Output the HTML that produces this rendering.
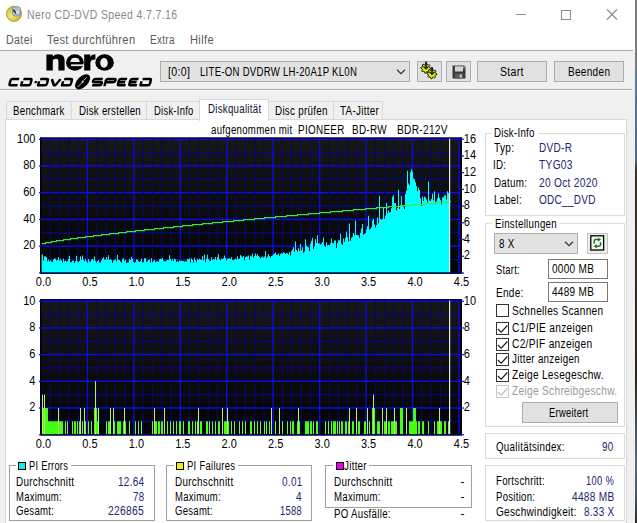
<!DOCTYPE html>
<html><head><meta charset="utf-8"><style>
*{margin:0;padding:0;box-sizing:border-box}
html,body{width:637px;height:523px;overflow:hidden;background:#f0f0f0;font-family:"Liberation Sans",sans-serif}
.a{position:absolute}
.t{position:absolute;white-space:pre;line-height:1;transform-origin:0 0;font-family:"Liberation Sans",sans-serif}
.btn{position:absolute;background:#e1e1e1;border:1px solid #adadad}
.grp{position:absolute;border:1px solid #dcdcdc}
.grpd{position:absolute;border:1px solid #a0a0a0}
.cb{position:absolute;width:13px;height:13px;border:1px solid #333;background:#fff}
</style></head><body>
<div class="a" style="left:0;top:0;width:635px;height:50px;background:#fff"></div>
<div class="a" style="left:0;top:50px;width:633px;height:1px;background:#a9a9a9"></div>
<div class="a" style="left:635px;top:0;width:2px;height:523px;background:linear-gradient(#7a7a7a 0,#7a7a7a 66px,#5a7c9a 74px,#4a6c8c 160px,#3a3224 170px,#2c281c 380px,#4a5460 430px,#5a6a7a 460px,#4a5a68 495px,#2a2a2a 523px)"></div>
<svg class="a" style="left:5px;top:5px" width="18" height="18"><defs><radialGradient id="ic" cx="0.35" cy="0.6" r="0.7"><stop offset="0" stop-color="#f4ec70"/><stop offset="1" stop-color="#c0a830"/></radialGradient></defs><circle cx="9" cy="8.8" r="7.6" fill="url(#ic)" stroke="#a09040" stroke-width="0.8"/><rect x="7.5" y="1.8" width="8" height="9" rx="2" fill="#b0c0cc" stroke="#707a84" stroke-width="0.6"/><path d="M8.3 4.8L11 8.3" stroke="#303030" stroke-width="1.5"/><circle cx="12.5" cy="7" r="1.3" fill="#e0eef8"/></svg>
<div class="a" style="left:516px;top:14px;width:10px;height:1px;background:#8c8c8c"></div>
<div class="a" style="left:561px;top:9.5px;width:10px;height:10px;border:1px solid #8c8c8c"></div>
<svg class="a" style="left:606px;top:9px" width="12" height="11"><path d="M1 0.5L11 10.5M11 0.5L1 10.5" stroke="#8c8c8c" stroke-width="1.1"/></svg>
<div class="a" style="left:0;top:89px;width:632px;height:1px;background:#a9a9a9"></div>
<div class="a" style="left:0;top:90px;width:632px;height:1px;background:#fff"></div>
<div class="a" style="left:160px;top:61px;width:250px;height:21px;background:#e2e2e2;border:1px solid #adadad"></div>
<svg class="a" style="left:396px;top:69px" width="10" height="6"><path d="M1 0.8L5 4.6L9 0.8" fill="none" stroke="#333" stroke-width="1.2"/></svg>
<div class="btn" style="left:417px;top:61px;width:25px;height:21px"></div>
<div class="btn" style="left:446px;top:61px;width:25px;height:21px"></div>
<svg class="a" style="left:418px;top:60px" width="22" height="23"><polygon points="12.80,8.20 12.70,9.18 11.13,9.58 10.79,10.20 11.34,11.74 10.58,12.36 9.18,11.53 8.50,11.73 7.80,13.20 6.82,13.10 6.42,11.53 5.80,11.19 4.26,11.74 3.64,10.98 4.47,9.58 4.27,8.90 2.80,8.20 2.90,7.22 4.47,6.82 4.81,6.20 4.26,4.66 5.02,4.04 6.42,4.87 7.10,4.67 7.80,3.20 8.78,3.30 9.18,4.87 9.80,5.21 11.34,4.66 11.96,5.42 11.13,6.82 11.33,7.50" fill="#e4ee10" stroke="#101000" stroke-width="0.9"/><polygon points="18.90,13.80 18.80,14.78 17.23,15.18 16.89,15.80 17.44,17.34 16.68,17.96 15.28,17.13 14.60,17.33 13.90,18.80 12.92,18.70 12.52,17.13 11.90,16.79 10.36,17.34 9.74,16.58 10.57,15.18 10.37,14.50 8.90,13.80 9.00,12.82 10.57,12.42 10.91,11.80 10.36,10.26 11.12,9.64 12.52,10.47 13.20,10.27 13.90,8.80 14.88,8.90 15.28,10.47 15.90,10.81 17.44,10.26 18.06,11.02 17.23,12.42 17.43,13.10" fill="#e4ee10" stroke="#101000" stroke-width="0.9"/><path d="M8 1.5V8.5M14 7V14" stroke="#181818" stroke-width="1.7"/><path d="M5.5 6.5L8 9L10.5 6.5M11.5 12L14 14.5L16.5 12" fill="none" stroke="#181818" stroke-width="1.1"/></svg><svg class="a" style="left:452px;top:65px" width="14" height="14"><path d="M0.5 0.5H12L13.5 2V13.5H0.5Z" fill="#3a3a3a"/><rect x="3" y="1.3" width="8" height="5.2" fill="#d4d4d4"/><rect x="11.3" y="1.8" width="1.2" height="1.6" fill="#d4d4d4"/><rect x="3" y="8.5" width="8" height="5" fill="#5a5a5a"/><rect x="7.6" y="9.5" width="2.4" height="3" fill="#c0c0c0"/></svg>
<div class="btn" style="left:477px;top:61px;width:70px;height:21px"></div>
<div class="btn" style="left:554px;top:61px;width:70px;height:21px"></div>
<svg class="a" style="left:0;top:0" width="160" height="92"><path d="M46.4 70.6V54.6H52.8V56.6Q54.6 54.2 58.2 54.2Q64.6 54.2 64.6 60.6V70.6H58.4V61.4Q58.4 58.8 56 58.8Q52.8 58.8 52.8 61.6V70.6Z" fill="#000"/><ellipse cx="74.9" cy="62.5" rx="8.9" ry="8.2" fill="#000"/><path d="M70.3 61.9Q70.7 57.7 75 57.7Q79.3 57.7 79.7 61.9Z" fill="#f0f0f0"/><rect x="71" y="64.4" width="13" height="1.7" fill="#f0f0f0"/><path d="M84.2 70.6V54.6H90.2V57Q91.5 54.2 95.4 54.2V59.6Q90.4 59.6 90.4 63V70.6Z" fill="#000"/><ellipse cx="104.6" cy="62.5" rx="9.3" ry="8.2" fill="#000"/><ellipse cx="104" cy="62.9" rx="3.8" ry="4.8" fill="#f0f0f0"/></svg>
<svg class="a" style="left:0;top:0" width="160" height="92"><g transform="translate(20.47 0) skewX(-14)"><path d="M18.35 79.05 H11.450000000000001 Q10.05 79.05 10.05 80.45 V83.75 Q10.05 85.15 11.450000000000001 85.15 H18.35 M22.650000000000002 79.05 H29.550000000000004 Q30.950000000000003 79.05 30.950000000000003 80.45 V83.75 Q30.950000000000003 85.15 29.550000000000004 85.15 H22.05 V81.3 M51.05 79.05 L54.704 85.15 H56.269999999999996 L59.75 79.05 M39.45 79.05 H45.95 Q47.35 79.05 47.35 80.45 V83.75 Q47.35 85.15 45.95 85.15 H38.85 V81.3 M63.45 79.05 H69.94999999999999 Q71.35 79.05 71.35 80.45 V83.75 Q71.35 85.15 69.94999999999999 85.15 H62.85 V81.3 M101.95 79.05 H94.25 Q92.85 79.05 92.85 80.45 V81.1 Q92.85 82.1 94.25 82.1 H100.55 Q101.95 82.1 101.95 83.1 V83.75 Q101.95 85.15 100.55 85.15 H92.85 M105.45 86.25 V80.45 Q105.45 79.05 106.85000000000001 79.05 H113.55 Q114.95 79.05 114.95 80.45 V81.1 Q114.95 82.1 113.55 82.1 H106.45 M126.35 79.05 H119.85000000000001 Q118.45 79.05 118.45 80.45 V83.75 Q118.45 85.15 119.85000000000001 85.15 H126.35 M118.45 82.1 H125.14999999999999 M137.75 79.05 H131.25 Q129.85 79.05 129.85 80.45 V83.75 Q129.85 85.15 131.25 85.15 H137.75 M129.85 82.1 H136.55 M141.85 79.05 H148.95 Q150.35 79.05 150.35 80.45 V83.75 Q150.35 85.15 148.95 85.15 H141.25 V81.3" fill="none" stroke="#000" stroke-width="2.55" stroke-linejoin="round"/><rect x="34.6" y="81" width="2.2" height="2.2" fill="#000"/></g><g transform="translate(82.6 81.8) rotate(-45)"><ellipse cx="0" cy="0" rx="9.2" ry="5.3" fill="#000"/><path d="M-7 0.2 H-1.5 M1.5 -0.2 H6" stroke="#e8e8e8" stroke-width="0.8"/><ellipse cx="0" cy="0" rx="1.3" ry="0.9" fill="#e0e0e0"/></g></svg>
<div class="a" style="left:6px;top:101px;width:66px;height:19px;background:#f0f0f0;border:1px solid #d9d9d9;border-bottom:none"></div>
<div class="a" style="left:71px;top:101px;width:76px;height:19px;background:#f0f0f0;border:1px solid #d9d9d9;border-bottom:none"></div>
<div class="a" style="left:146px;top:101px;width:54px;height:19px;background:#f0f0f0;border:1px solid #d9d9d9;border-bottom:none"></div>
<div class="a" style="left:268px;top:101px;width:66px;height:19px;background:#f0f0f0;border:1px solid #d9d9d9;border-bottom:none"></div>
<div class="a" style="left:333px;top:101px;width:50px;height:19px;background:#f0f0f0;border:1px solid #d9d9d9;border-bottom:none"></div>
<div class="a" style="left:5px;top:119px;width:622px;height:410px;background:#fff;border:1px solid #d9d9d9"></div>
<div class="a" style="left:199px;top:98.5px;width:70px;height:22px;background:#fff;border:1px solid #d9d9d9;border-bottom:none"></div>
<div class="grp" style="left:485px;top:133px;width:140px;height:83px"></div>
<div class="a" style="left:492px;top:128px;width:46px;height:10px;background:#fff"></div>
<div class="grp" style="left:485px;top:223px;width:140px;height:204px"></div>
<div class="a" style="left:492px;top:218px;width:67px;height:10px;background:#fff"></div>
<div class="grp" style="left:485px;top:433px;width:140px;height:26px"></div>
<div class="grp" style="left:485px;top:465px;width:140px;height:56px"></div>
<div class="a" style="left:494px;top:233px;width:84px;height:21px;background:#e2e2e2;border:1px solid #adadad"></div>
<svg class="a" style="left:563.6px;top:241px" width="10" height="6"><path d="M1 0.8L5 4.6L9 0.8" fill="none" stroke="#333" stroke-width="1.2"/></svg>
<div class="btn" style="left:587px;top:233px;width:21px;height:21px;background:#ececec;border-color:#c4c4c4"></div>
<svg class="a" style="left:589px;top:234px" width="17" height="18"><rect x="1.8" y="1.8" width="12.8" height="14.2" fill="#f2fbf2" stroke="#000" stroke-width="1.3"/><path d="M5.2 9.5V7.3Q5.2 5.6 6.9 5.6H9.5M11.5 8.3V10.6Q11.5 12.3 9.8 12.3H7.3" fill="none" stroke="#1e6e1e" stroke-width="1.5"/><path d="M9 3.4L12 5.6L9 7.8ZM7.8 10.1L4.8 12.3L7.8 14.5Z" fill="#1e6e1e"/></svg>
<div class="a" style="left:548px;top:259px;width:60px;height:20px;background:#fff;border:1px solid #7a7a7a"></div>
<div class="a" style="left:548px;top:282px;width:60px;height:20px;background:#fff;border:1px solid #7a7a7a"></div>
<div class="cb" style="left:496px;top:304px;border-color:#333"></div>
<div class="cb" style="left:496px;top:322px;border-color:#333"></div>
<svg class="a" style="left:496px;top:322px" width="13" height="13"><path d="M1.8 7L5.2 10.2L11.3 3.5" fill="none" stroke="#202020" stroke-width="1.2"/></svg>
<div class="cb" style="left:496px;top:337.5px;border-color:#333"></div>
<svg class="a" style="left:496px;top:337.5px" width="13" height="13"><path d="M1.8 7L5.2 10.2L11.3 3.5" fill="none" stroke="#202020" stroke-width="1.2"/></svg>
<div class="cb" style="left:496px;top:353px;border-color:#333"></div>
<svg class="a" style="left:496px;top:353px" width="13" height="13"><path d="M1.8 7L5.2 10.2L11.3 3.5" fill="none" stroke="#202020" stroke-width="1.2"/></svg>
<div class="cb" style="left:496px;top:369px;border-color:#333"></div>
<svg class="a" style="left:496px;top:369px" width="13" height="13"><path d="M1.8 7L5.2 10.2L11.3 3.5" fill="none" stroke="#202020" stroke-width="1.2"/></svg>
<div class="cb" style="left:496px;top:384.5px;border-color:#c8c8c8"></div>
<svg class="a" style="left:496px;top:384.5px" width="13" height="13"><path d="M1.8 7L5.2 10.2L11.3 3.5" fill="none" stroke="#c0c0c0" stroke-width="1.2"/></svg>
<div class="btn" style="left:522px;top:402px;width:96px;height:21px"></div>
<div class="grpd" style="left:8.5px;top:465px;width:146px;height:56px"></div>
<div class="a" style="left:16px;top:459px;width:55px;height:10px;background:#fff"></div>
<div class="a" style="left:18px;top:462px;width:8px;height:8px;background:#10f0f0;border:1px solid #000"></div>
<div class="grpd" style="left:166px;top:465px;width:146px;height:56px"></div>
<div class="a" style="left:174px;top:459px;width:64px;height:10px;background:#fff"></div>
<div class="a" style="left:176px;top:462px;width:8px;height:8px;background:#f0f000;border:1px solid #000"></div>
<div class="grpd" style="left:325px;top:465px;width:147px;height:43px"></div>
<div class="a" style="left:333px;top:459px;width:36px;height:10px;background:#fff"></div>
<div class="a" style="left:335.5px;top:462px;width:8px;height:8px;background:#f000f0;border:1px solid #000"></div>
<svg style="position:absolute;left:0;top:0" width="637" height="523">
<defs>
<linearGradient id="gT" x1="0" y1="0" x2="0" y2="1"><stop offset="0" stop-color="#171714"/><stop offset="1" stop-color="#030303"/></linearGradient>
<linearGradient id="gB" x1="0" y1="0" x2="0" y2="1"><stop offset="0" stop-color="#171714"/><stop offset="1" stop-color="#030303"/></linearGradient>
</defs>
<rect x="40" y="137.5" width="422" height="136" fill="url(#gT)"/>
<rect x="41" y="138.50" width="420" height="1.4" fill="#0c0cf0"/>
<rect x="41" y="151.97" width="420" height="1.2" fill="#08088c"/>
<rect x="41" y="165.24" width="420" height="1.4" fill="#0c0cf0"/>
<rect x="41" y="178.71" width="420" height="1.2" fill="#08088c"/>
<rect x="41" y="191.98" width="420" height="1.4" fill="#0c0cf0"/>
<rect x="41" y="205.45" width="420" height="1.2" fill="#08088c"/>
<rect x="41" y="218.72" width="420" height="1.4" fill="#0c0cf0"/>
<rect x="41" y="232.19" width="420" height="1.2" fill="#08088c"/>
<rect x="41" y="245.46" width="420" height="1.4" fill="#0c0cf0"/>
<rect x="41" y="258.93" width="420" height="1.2" fill="#08088c"/>
<rect x="41" y="272.20" width="420" height="1.4" fill="#0c0cf0"/>
<rect x="40.30" y="138" width="1.4" height="134" fill="#0c0ce0"/>
<rect x="49.69" y="138" width="1.2" height="134" fill="#080866"/>
<rect x="58.98" y="138" width="1.2" height="134" fill="#080866"/>
<rect x="68.26" y="138" width="1.2" height="134" fill="#080866"/>
<rect x="77.55" y="138" width="1.2" height="134" fill="#080866"/>
<rect x="86.74" y="138" width="1.4" height="134" fill="#0c0ce0"/>
<rect x="96.13" y="138" width="1.2" height="134" fill="#080866"/>
<rect x="105.42" y="138" width="1.2" height="134" fill="#080866"/>
<rect x="114.70" y="138" width="1.2" height="134" fill="#080866"/>
<rect x="123.99" y="138" width="1.2" height="134" fill="#080866"/>
<rect x="133.18" y="138" width="1.4" height="134" fill="#0c0ce0"/>
<rect x="142.57" y="138" width="1.2" height="134" fill="#080866"/>
<rect x="151.86" y="138" width="1.2" height="134" fill="#080866"/>
<rect x="161.14" y="138" width="1.2" height="134" fill="#080866"/>
<rect x="170.43" y="138" width="1.2" height="134" fill="#080866"/>
<rect x="179.62" y="138" width="1.4" height="134" fill="#0c0ce0"/>
<rect x="189.01" y="138" width="1.2" height="134" fill="#080866"/>
<rect x="198.30" y="138" width="1.2" height="134" fill="#080866"/>
<rect x="207.58" y="138" width="1.2" height="134" fill="#080866"/>
<rect x="216.87" y="138" width="1.2" height="134" fill="#080866"/>
<rect x="226.06" y="138" width="1.4" height="134" fill="#0c0ce0"/>
<rect x="235.45" y="138" width="1.2" height="134" fill="#080866"/>
<rect x="244.74" y="138" width="1.2" height="134" fill="#080866"/>
<rect x="254.02" y="138" width="1.2" height="134" fill="#080866"/>
<rect x="263.31" y="138" width="1.2" height="134" fill="#080866"/>
<rect x="272.50" y="138" width="1.4" height="134" fill="#0c0ce0"/>
<rect x="281.89" y="138" width="1.2" height="134" fill="#080866"/>
<rect x="291.18" y="138" width="1.2" height="134" fill="#080866"/>
<rect x="300.46" y="138" width="1.2" height="134" fill="#080866"/>
<rect x="309.75" y="138" width="1.2" height="134" fill="#080866"/>
<rect x="318.94" y="138" width="1.4" height="134" fill="#0c0ce0"/>
<rect x="328.33" y="138" width="1.2" height="134" fill="#080866"/>
<rect x="337.62" y="138" width="1.2" height="134" fill="#080866"/>
<rect x="346.90" y="138" width="1.2" height="134" fill="#080866"/>
<rect x="356.19" y="138" width="1.2" height="134" fill="#080866"/>
<rect x="365.38" y="138" width="1.4" height="134" fill="#0c0ce0"/>
<rect x="374.77" y="138" width="1.2" height="134" fill="#080866"/>
<rect x="384.06" y="138" width="1.2" height="134" fill="#080866"/>
<rect x="393.34" y="138" width="1.2" height="134" fill="#080866"/>
<rect x="402.63" y="138" width="1.2" height="134" fill="#080866"/>
<rect x="411.82" y="138" width="1.4" height="134" fill="#0c0ce0"/>
<rect x="421.21" y="138" width="1.2" height="134" fill="#080866"/>
<rect x="430.50" y="138" width="1.2" height="134" fill="#080866"/>
<rect x="439.78" y="138" width="1.2" height="134" fill="#080866"/>
<rect x="449.07" y="138" width="1.2" height="134" fill="#080866"/>
<rect x="458.26" y="138" width="1.4" height="134" fill="#0c0ce0"/>
<path d="M41 273 L41 254.6 L42 254.6 L42 254.6 L43 254.6 L43 260.5 L44 260.5 L44 256.2 L45 256.2 L45 256.4 L46 256.4 L46 257.3 L47 257.3 L47 261.2 L48 261.2 L48 259.5 L49 259.5 L49 261.4 L50 261.4 L50 260.6 L51 260.6 L51 261.6 L52 261.6 L52 261.9 L53 261.9 L53 259.7 L54 259.7 L54 258.3 L55 258.3 L55 258.8 L56 258.8 L56 260.5 L57 260.5 L57 260.1 L58 260.1 L58 257.0 L59 257.0 L59 260.6 L60 260.6 L60 258.8 L61 258.8 L61 260.4 L62 260.4 L62 262.5 L63 262.5 L63 258.8 L64 258.8 L64 261.3 L65 261.3 L65 260.4 L66 260.4 L66 261.6 L67 261.6 L67 261.1 L68 261.1 L68 259.0 L69 259.0 L69 255.8 L70 255.8 L70 262.3 L71 262.3 L71 261.9 L72 261.9 L72 260.8 L73 260.8 L73 260.6 L74 260.6 L74 262.9 L75 262.9 L75 260.9 L76 260.9 L76 255.7 L77 255.7 L77 261.4 L78 261.4 L78 261.9 L79 261.9 L79 261.0 L80 261.0 L80 256.3 L81 256.3 L81 259.7 L82 259.7 L82 255.5 L83 255.5 L83 259.4 L84 259.4 L84 261.2 L85 261.2 L85 259.0 L86 259.0 L86 261.3 L87 261.3 L87 262.7 L88 262.7 L88 259.1 L89 259.1 L89 261.3 L90 261.3 L90 261.7 L91 261.7 L91 259.5 L92 259.5 L92 259.0 L93 259.0 L93 260.3 L94 260.3 L94 256.4 L95 256.4 L95 260.8 L96 260.8 L96 262.5 L97 262.5 L97 260.9 L98 260.9 L98 260.0 L99 260.0 L99 262.6 L100 262.6 L100 262.6 L101 262.6 L101 260.5 L102 260.5 L102 258.6 L103 258.6 L103 257.2 L104 257.2 L104 259.6 L105 259.6 L105 259.8 L106 259.8 L106 257.0 L107 257.0 L107 259.2 L108 259.2 L108 255.2 L109 255.2 L109 260.1 L110 260.1 L110 259.2 L111 259.2 L111 260.1 L112 260.1 L112 262.9 L113 262.9 L113 260.6 L114 260.6 L114 259.7 L115 259.7 L115 259.4 L116 259.4 L116 261.6 L117 261.6 L117 255.0 L118 255.0 L118 260.1 L119 260.1 L119 259.9 L120 259.9 L120 261.4 L121 261.4 L121 262.4 L122 262.4 L122 259.2 L123 259.2 L123 258.3 L124 258.3 L124 261.1 L125 261.1 L125 259.4 L126 259.4 L126 262.9 L127 262.9 L127 262.6 L128 262.6 L128 262.5 L129 262.5 L129 258.8 L130 258.8 L130 259.9 L131 259.9 L131 256.7 L132 256.7 L132 258.5 L133 258.5 L133 262.0 L134 262.0 L134 262.9 L135 262.9 L135 261.9 L136 261.9 L136 259.4 L137 259.4 L137 259.5 L138 259.5 L138 261.2 L139 261.2 L139 262.1 L140 262.1 L140 261.1 L141 261.1 L141 258.5 L142 258.5 L142 262.5 L143 262.5 L143 262.1 L144 262.1 L144 258.3 L145 258.3 L145 258.3 L146 258.3 L146 262.0 L147 262.0 L147 261.3 L148 261.3 L148 260.1 L149 260.1 L149 259.6 L150 259.6 L150 262.6 L151 262.6 L151 258.2 L152 258.2 L152 262.3 L153 262.3 L153 260.7 L154 260.7 L154 259.8 L155 259.8 L155 262.3 L156 262.3 L156 261.2 L157 261.2 L157 261.2 L158 261.2 L158 261.7 L159 261.7 L159 259.3 L160 259.3 L160 258.7 L161 258.7 L161 259.0 L162 259.0 L162 258.0 L163 258.0 L163 260.5 L164 260.5 L164 261.2 L165 261.2 L165 261.2 L166 261.2 L166 260.6 L167 260.6 L167 259.9 L168 259.9 L168 260.1 L169 260.1 L169 255.3 L170 255.3 L170 258.9 L171 258.9 L171 260.7 L172 260.7 L172 258.8 L173 258.8 L173 261.0 L174 261.0 L174 258.7 L175 258.7 L175 259.3 L176 259.3 L176 262.1 L177 262.1 L177 261.0 L178 261.0 L178 262.0 L179 262.0 L179 260.6 L180 260.6 L180 260.9 L181 260.9 L181 260.6 L182 260.6 L182 261.2 L183 261.2 L183 261.1 L184 261.1 L184 261.7 L185 261.7 L185 261.2 L186 261.2 L186 261.5 L187 261.5 L187 258.9 L188 258.9 L188 259.3 L189 259.3 L189 258.5 L190 258.5 L190 262.6 L191 262.6 L191 258.3 L192 258.3 L192 259.9 L193 259.9 L193 262.6 L194 262.6 L194 257.7 L195 257.7 L195 260.3 L196 260.3 L196 262.3 L197 262.3 L197 258.7 L198 258.7 L198 260.0 L199 260.0 L199 258.8 L200 258.8 L200 259.5 L201 259.5 L201 260.1 L202 260.1 L202 256.1 L203 256.1 L203 260.1 L204 260.1 L204 254.4 L205 254.4 L205 262.2 L206 262.2 L206 258.7 L207 258.7 L207 254.8 L208 254.8 L208 258.9 L209 258.9 L209 260.5 L210 260.5 L210 261.0 L211 261.0 L211 257.2 L212 257.2 L212 260.1 L213 260.1 L213 258.9 L214 258.9 L214 259.6 L215 259.6 L215 257.1 L216 257.1 L216 260.1 L217 260.1 L217 257.2 L218 257.2 L218 254.2 L219 254.2 L219 259.3 L220 259.3 L220 260.2 L221 260.2 L221 258.5 L222 258.5 L222 259.0 L223 259.0 L223 258.3 L224 258.3 L224 255.6 L225 255.6 L225 257.9 L226 257.9 L226 260.4 L227 260.4 L227 258.7 L228 258.7 L228 258.4 L229 258.4 L229 258.3 L230 258.3 L230 259.1 L231 259.1 L231 257.3 L232 257.3 L232 259.9 L233 259.9 L233 260.3 L234 260.3 L234 259.4 L235 259.4 L235 258.8 L236 258.8 L236 259.5 L237 259.5 L237 256.3 L238 256.3 L238 258.9 L239 258.9 L239 258.4 L240 258.4 L240 255.0 L241 255.0 L241 256.3 L242 256.3 L242 257.4 L243 257.4 L243 256.0 L244 256.0 L244 260.2 L245 260.2 L245 257.1 L246 257.1 L246 256.6 L247 256.6 L247 256.6 L248 256.6 L248 255.5 L249 255.5 L249 259.7 L250 259.7 L250 255.4 L251 255.4 L251 256.5 L252 256.5 L252 253.6 L253 253.6 L253 257.7 L254 257.7 L254 255.9 L255 255.9 L255 253.6 L256 253.6 L256 255.8 L257 255.8 L257 253.9 L258 253.9 L258 255.9 L259 255.9 L259 257.1 L260 257.1 L260 258.6 L261 258.6 L261 257.3 L262 257.3 L262 256.4 L263 256.4 L263 257.5 L264 257.5 L264 256.6 L265 256.6 L265 251.0 L266 251.0 L266 257.9 L267 257.9 L267 256.5 L268 256.5 L268 254.1 L269 254.1 L269 256.3 L270 256.3 L270 257.7 L271 257.7 L271 256.1 L272 256.1 L272 255.6 L273 255.6 L273 254.4 L274 254.4 L274 253.6 L275 253.6 L275 252.4 L276 252.4 L276 254.9 L277 254.9 L277 254.8 L278 254.8 L278 253.6 L279 253.6 L279 256.1 L280 256.1 L280 254.1 L281 254.1 L281 253.3 L282 253.3 L282 253.4 L283 253.4 L283 252.3 L284 252.3 L284 253.0 L285 253.0 L285 254.0 L286 254.0 L286 252.9 L287 252.9 L287 253.2 L288 253.2 L288 254.5 L289 254.5 L289 252.0 L290 252.0 L290 255.5 L291 255.5 L291 251.1 L292 251.1 L292 249.5 L293 249.5 L293 247.2 L294 247.2 L294 251.8 L295 251.8 L295 241.6 L296 241.6 L296 250.1 L297 250.1 L297 251.8 L298 251.8 L298 248.2 L299 248.2 L299 251.1 L300 251.1 L300 244.0 L301 244.0 L301 250.6 L302 250.6 L302 247.2 L303 247.2 L303 252.8 L304 252.8 L304 251.6 L305 251.6 L305 239.2 L306 239.2 L306 245.4 L307 245.4 L307 246.8 L308 246.8 L308 247.3 L309 247.3 L309 250.9 L310 250.9 L310 243.8 L311 243.8 L311 240.7 L312 240.7 L312 237.7 L313 237.7 L313 248.7 L314 248.7 L314 246.6 L315 246.6 L315 238.9 L316 238.9 L316 243.0 L317 243.0 L317 235.3 L318 235.3 L318 243.4 L319 243.4 L319 243.6 L320 243.6 L320 244.4 L321 244.4 L321 243.6 L322 243.6 L322 241.9 L323 241.9 L323 237.5 L324 237.5 L324 245.7 L325 245.7 L325 246.9 L326 246.9 L326 242.3 L327 242.3 L327 245.6 L328 245.6 L328 244.9 L329 244.9 L329 245.3 L330 245.3 L330 243.6 L331 243.6 L331 238.5 L332 238.5 L332 242.7 L333 242.7 L333 243.3 L334 243.3 L334 240.4 L335 240.4 L335 240.5 L336 240.5 L336 247.9 L337 247.9 L337 242.7 L338 242.7 L338 240.3 L339 240.3 L339 240.2 L340 240.2 L340 233.8 L341 233.8 L341 243.5 L342 243.5 L342 245.0 L343 245.0 L343 238.7 L344 238.7 L344 241.8 L345 241.8 L345 237.8 L346 237.8 L346 231.4 L347 231.4 L347 237.0 L348 237.0 L348 241.6 L349 241.6 L349 223.5 L350 223.5 L350 240.8 L351 240.8 L351 237.7 L352 237.7 L352 236.7 L353 236.7 L353 233.0 L354 233.0 L354 235.2 L355 235.2 L355 220.4 L356 220.4 L356 235.1 L357 235.1 L357 235.0 L358 235.0 L358 235.6 L359 235.6 L359 237.7 L360 237.7 L360 233.0 L361 233.0 L361 228.5 L362 228.5 L362 224.0 L363 224.0 L363 234.5 L364 234.5 L364 234.0 L365 234.0 L365 232.9 L366 232.9 L366 229.5 L367 229.5 L367 226.3 L368 226.3 L368 215.7 L369 215.7 L369 229.4 L370 229.4 L370 228.9 L371 228.9 L371 227.3 L372 227.3 L372 220.4 L373 220.4 L373 219.0 L374 219.0 L374 224.4 L375 224.4 L375 227.8 L376 227.8 L376 225.0 L377 225.0 L377 217.3 L378 217.3 L378 223.3 L379 223.3 L379 196.0 L380 196.0 L380 219.1 L381 219.1 L381 219.7 L382 219.7 L382 219.1 L383 219.1 L383 208.0 L384 208.0 L384 218.8 L385 218.8 L385 215.4 L386 215.4 L386 202.8 L387 202.8 L387 213.3 L388 213.3 L388 210.4 L389 210.4 L389 212.4 L390 212.4 L390 212.0 L391 212.0 L391 207.9 L392 207.9 L392 196.7 L393 196.7 L393 195.0 L394 195.0 L394 203.3 L395 203.3 L395 203.1 L396 203.1 L396 210.5 L397 210.5 L397 207.9 L398 207.9 L398 189.8 L399 189.8 L399 209.0 L400 209.0 L400 206.3 L401 206.3 L401 196.0 L402 196.0 L402 205.5 L403 205.5 L403 206.5 L404 206.5 L404 209.0 L405 209.0 L405 193.9 L406 193.9 L406 190.6 L407 190.6 L407 170.7 L408 170.7 L408 183.4 L409 183.4 L409 185.3 L410 185.3 L410 172.2 L411 172.2 L411 169.2 L412 169.2 L412 171.5 L413 171.5 L413 178.5 L414 178.5 L414 179.3 L415 179.3 L415 182.3 L416 182.3 L416 186.0 L417 186.0 L417 191.2 L418 191.2 L418 187.5 L419 187.5 L419 189.9 L420 189.9 L420 198.3 L421 198.3 L421 205.9 L422 205.9 L422 196.4 L423 196.4 L423 200.9 L424 200.9 L424 196.5 L425 196.5 L425 197.6 L426 197.6 L426 199.6 L427 199.6 L427 202.3 L428 202.3 L428 181.4 L429 181.4 L429 200.6 L430 200.6 L430 200.9 L431 200.9 L431 198.9 L432 198.9 L432 193.7 L433 193.7 L433 200.2 L434 200.2 L434 191.3 L435 191.3 L435 204.3 L436 204.3 L436 201.3 L437 201.3 L437 198.2 L438 198.2 L438 193.6 L439 193.6 L439 197.7 L440 197.7 L440 199.9 L441 199.9 L441 204.3 L442 204.3 L442 197.4 L443 197.4 L443 197.2 L444 197.2 L444 195.6 L445 195.6 L445 195.2 L446 195.2 L446 199.5 L447 199.5 L447 191.3 L448 191.3 L448 192.9 L449 192.9 L449 198.1 L450 198.1 L449.5 273 Z" fill="#00ffff"/>
<g fill="#3ee83e"><rect x="41" y="243" width="5" height="1.2"/><rect x="45" y="242" width="7" height="1.2"/><rect x="51" y="241" width="6" height="1.2"/><rect x="56" y="240" width="8" height="1.2"/><rect x="63" y="239" width="8" height="1.2"/><rect x="70" y="238" width="8" height="1.2"/><rect x="77" y="237" width="9" height="1.2"/><rect x="85" y="236" width="9" height="1.2"/><rect x="93" y="235" width="9" height="1.2"/><rect x="101" y="234" width="9" height="1.2"/><rect x="109" y="233" width="10" height="1.2"/><rect x="118" y="232" width="9" height="1.2"/><rect x="126" y="231" width="10" height="1.2"/><rect x="135" y="230" width="10" height="1.2"/><rect x="144" y="229" width="11" height="1.2"/><rect x="154" y="228" width="10" height="1.2"/><rect x="163" y="227" width="11" height="1.2"/><rect x="173" y="226" width="10" height="1.2"/><rect x="182" y="225" width="11" height="1.2"/><rect x="192" y="224" width="11" height="1.2"/><rect x="202" y="223" width="11" height="1.2"/><rect x="212" y="222" width="11" height="1.2"/><rect x="222" y="221" width="12" height="1.2"/><rect x="233" y="220" width="11" height="1.2"/><rect x="243" y="219" width="12" height="1.2"/><rect x="254" y="218" width="11" height="1.2"/><rect x="264" y="217" width="12" height="1.2"/><rect x="275" y="216" width="12" height="1.2"/><rect x="286" y="215" width="12" height="1.2"/><rect x="297" y="214" width="12" height="1.2"/><rect x="308" y="213" width="12" height="1.2"/><rect x="319" y="212" width="12" height="1.2"/><rect x="330" y="211" width="13" height="1.2"/><rect x="342" y="210" width="12" height="1.2"/><rect x="353" y="209" width="13" height="1.2"/><rect x="365" y="208" width="12" height="1.2"/><rect x="376" y="207" width="13" height="1.2"/><rect x="388" y="206" width="13" height="1.2"/><rect x="400" y="205" width="12" height="1.2"/><rect x="411" y="204" width="13" height="1.2"/><rect x="423" y="203" width="13" height="1.2"/><rect x="435" y="202" width="13" height="1.2"/><rect x="447" y="201" width="4" height="1.2"/></g>
<rect x="449" y="138.5" width="1.2" height="134" fill="#e8e8e8"/>
<rect x="40" y="137.5" width="422" height="1" fill="#000030"/>
<rect x="40" y="137.5" width="1.6" height="136" fill="#000"/>
<rect x="460.4" y="137.5" width="1.6" height="136" fill="#000"/>
<rect x="40" y="272.3" width="422" height="1.4" fill="#000028"/>
<rect x="39" y="138.60" width="2" height="1.3" fill="#1c1cc8"/>
<rect x="39" y="165.34" width="2" height="1.3" fill="#1c1cc8"/>
<rect x="39" y="192.08" width="2" height="1.3" fill="#1c1cc8"/>
<rect x="39" y="218.82" width="2" height="1.3" fill="#1c1cc8"/>
<rect x="39" y="245.56" width="2" height="1.3" fill="#1c1cc8"/>
<rect x="39" y="272.30" width="2" height="1.3" fill="#1c1cc8"/>
<rect x="461" y="138.60" width="3" height="1.3" fill="#1c1cc8"/>
<rect x="461" y="155.31" width="3" height="1.3" fill="#1c1cc8"/>
<rect x="461" y="172.03" width="3" height="1.3" fill="#1c1cc8"/>
<rect x="461" y="188.74" width="3" height="1.3" fill="#1c1cc8"/>
<rect x="461" y="205.45" width="3" height="1.3" fill="#1c1cc8"/>
<rect x="461" y="222.16" width="3" height="1.3" fill="#1c1cc8"/>
<rect x="461" y="238.87" width="3" height="1.3" fill="#1c1cc8"/>
<rect x="461" y="255.59" width="3" height="1.3" fill="#1c1cc8"/>
<rect x="461" y="272.30" width="3" height="1.3" fill="#1c1cc8"/>
<rect x="40" y="299" width="422" height="136" fill="url(#gB)"/>
<rect x="41" y="300.50" width="420" height="1.4" fill="#0c0cf0"/>
<rect x="41" y="313.95" width="420" height="1.2" fill="#08088c"/>
<rect x="41" y="327.20" width="420" height="1.4" fill="#0c0cf0"/>
<rect x="41" y="340.65" width="420" height="1.2" fill="#08088c"/>
<rect x="41" y="353.90" width="420" height="1.4" fill="#0c0cf0"/>
<rect x="41" y="367.35" width="420" height="1.2" fill="#08088c"/>
<rect x="41" y="380.60" width="420" height="1.4" fill="#0c0cf0"/>
<rect x="41" y="394.05" width="420" height="1.2" fill="#08088c"/>
<rect x="41" y="407.30" width="420" height="1.4" fill="#0c0cf0"/>
<rect x="41" y="420.75" width="420" height="1.2" fill="#08088c"/>
<rect x="41" y="434.00" width="420" height="1.4" fill="#0c0cf0"/>
<rect x="40.30" y="301" width="1.4" height="133" fill="#0c0ce0"/>
<rect x="49.69" y="301" width="1.2" height="133" fill="#080866"/>
<rect x="58.98" y="301" width="1.2" height="133" fill="#080866"/>
<rect x="68.26" y="301" width="1.2" height="133" fill="#080866"/>
<rect x="77.55" y="301" width="1.2" height="133" fill="#080866"/>
<rect x="86.74" y="301" width="1.4" height="133" fill="#0c0ce0"/>
<rect x="96.13" y="301" width="1.2" height="133" fill="#080866"/>
<rect x="105.42" y="301" width="1.2" height="133" fill="#080866"/>
<rect x="114.70" y="301" width="1.2" height="133" fill="#080866"/>
<rect x="123.99" y="301" width="1.2" height="133" fill="#080866"/>
<rect x="133.18" y="301" width="1.4" height="133" fill="#0c0ce0"/>
<rect x="142.57" y="301" width="1.2" height="133" fill="#080866"/>
<rect x="151.86" y="301" width="1.2" height="133" fill="#080866"/>
<rect x="161.14" y="301" width="1.2" height="133" fill="#080866"/>
<rect x="170.43" y="301" width="1.2" height="133" fill="#080866"/>
<rect x="179.62" y="301" width="1.4" height="133" fill="#0c0ce0"/>
<rect x="189.01" y="301" width="1.2" height="133" fill="#080866"/>
<rect x="198.30" y="301" width="1.2" height="133" fill="#080866"/>
<rect x="207.58" y="301" width="1.2" height="133" fill="#080866"/>
<rect x="216.87" y="301" width="1.2" height="133" fill="#080866"/>
<rect x="226.06" y="301" width="1.4" height="133" fill="#0c0ce0"/>
<rect x="235.45" y="301" width="1.2" height="133" fill="#080866"/>
<rect x="244.74" y="301" width="1.2" height="133" fill="#080866"/>
<rect x="254.02" y="301" width="1.2" height="133" fill="#080866"/>
<rect x="263.31" y="301" width="1.2" height="133" fill="#080866"/>
<rect x="272.50" y="301" width="1.4" height="133" fill="#0c0ce0"/>
<rect x="281.89" y="301" width="1.2" height="133" fill="#080866"/>
<rect x="291.18" y="301" width="1.2" height="133" fill="#080866"/>
<rect x="300.46" y="301" width="1.2" height="133" fill="#080866"/>
<rect x="309.75" y="301" width="1.2" height="133" fill="#080866"/>
<rect x="318.94" y="301" width="1.4" height="133" fill="#0c0ce0"/>
<rect x="328.33" y="301" width="1.2" height="133" fill="#080866"/>
<rect x="337.62" y="301" width="1.2" height="133" fill="#080866"/>
<rect x="346.90" y="301" width="1.2" height="133" fill="#080866"/>
<rect x="356.19" y="301" width="1.2" height="133" fill="#080866"/>
<rect x="365.38" y="301" width="1.4" height="133" fill="#0c0ce0"/>
<rect x="374.77" y="301" width="1.2" height="133" fill="#080866"/>
<rect x="384.06" y="301" width="1.2" height="133" fill="#080866"/>
<rect x="393.34" y="301" width="1.2" height="133" fill="#080866"/>
<rect x="402.63" y="301" width="1.2" height="133" fill="#080866"/>
<rect x="411.82" y="301" width="1.4" height="133" fill="#0c0ce0"/>
<rect x="421.21" y="301" width="1.2" height="133" fill="#080866"/>
<rect x="430.50" y="301" width="1.2" height="133" fill="#080866"/>
<rect x="439.78" y="301" width="1.2" height="133" fill="#080866"/>
<rect x="449.07" y="301" width="1.2" height="133" fill="#080866"/>
<rect x="458.26" y="301" width="1.4" height="133" fill="#0c0ce0"/>
<rect x="42.0" y="408.0" width="6.0" height="26.7" fill="#44ff14"/>
<rect x="42.0" y="394.6" width="1.0" height="40.0" fill="#b8f070"/>
<rect x="44.0" y="394.6" width="1.0" height="40.0" fill="#b8f070"/>
<rect x="48.0" y="421.3" width="15.0" height="13.3" fill="#44ff14"/>
<rect x="58.0" y="408.0" width="1.0" height="26.7" fill="#b8f070"/>
<rect x="65.0" y="421.3" width="1.0" height="13.3" fill="#70f840"/>
<rect x="67.0" y="421.3" width="1.0" height="13.3" fill="#70f840"/>
<rect x="72.0" y="421.3" width="1.0" height="13.3" fill="#70f840"/>
<rect x="74.0" y="421.3" width="2.0" height="13.3" fill="#44ff14"/>
<rect x="77.0" y="421.3" width="1.0" height="13.3" fill="#70f840"/>
<rect x="79.0" y="421.3" width="1.0" height="13.3" fill="#70f840"/>
<rect x="80.0" y="408.0" width="1.0" height="26.7" fill="#b8f070"/>
<rect x="82.0" y="421.3" width="1.0" height="13.3" fill="#70f840"/>
<rect x="84.0" y="408.0" width="1.0" height="26.7" fill="#b8f070"/>
<rect x="85.0" y="421.3" width="1.0" height="13.3" fill="#70f840"/>
<rect x="88.0" y="421.3" width="1.0" height="13.3" fill="#70f840"/>
<rect x="91.0" y="421.3" width="1.0" height="13.3" fill="#70f840"/>
<rect x="94.0" y="421.3" width="5.0" height="13.3" fill="#44ff14"/>
<rect x="94.0" y="408.0" width="3.0" height="26.7" fill="#44ff14"/>
<rect x="95.0" y="381.3" width="1.0" height="53.4" fill="#b8f070"/>
<rect x="98.0" y="408.0" width="1.0" height="26.7" fill="#b8f070"/>
<rect x="106.0" y="421.3" width="1.0" height="13.3" fill="#70f840"/>
<rect x="108.0" y="421.3" width="3.0" height="13.3" fill="#44ff14"/>
<rect x="110.0" y="408.0" width="1.0" height="26.7" fill="#b8f070"/>
<rect x="113.0" y="421.3" width="2.0" height="13.3" fill="#44ff14"/>
<rect x="113.0" y="408.0" width="1.0" height="26.7" fill="#b8f070"/>
<rect x="117.0" y="421.3" width="4.0" height="13.3" fill="#44ff14"/>
<rect x="123.0" y="421.3" width="3.0" height="13.3" fill="#44ff14"/>
<rect x="124.0" y="408.0" width="1.0" height="26.7" fill="#b8f070"/>
<rect x="129.0" y="421.3" width="1.0" height="13.3" fill="#70f840"/>
<rect x="135.0" y="421.3" width="1.0" height="13.3" fill="#70f840"/>
<rect x="138.0" y="421.3" width="1.0" height="13.3" fill="#70f840"/>
<rect x="141.0" y="421.3" width="1.0" height="13.3" fill="#70f840"/>
<rect x="152.0" y="421.3" width="1.0" height="13.3" fill="#70f840"/>
<rect x="154.0" y="421.3" width="3.0" height="13.3" fill="#44ff14"/>
<rect x="154.0" y="408.0" width="1.0" height="26.7" fill="#b8f070"/>
<rect x="158.0" y="421.3" width="2.0" height="13.3" fill="#44ff14"/>
<rect x="161.0" y="421.3" width="2.0" height="13.3" fill="#44ff14"/>
<rect x="164.0" y="408.0" width="1.0" height="26.7" fill="#b8f070"/>
<rect x="167.0" y="421.3" width="1.0" height="13.3" fill="#70f840"/>
<rect x="170.0" y="421.3" width="1.0" height="13.3" fill="#70f840"/>
<rect x="173.0" y="421.3" width="1.0" height="13.3" fill="#70f840"/>
<rect x="176.0" y="421.3" width="1.0" height="13.3" fill="#70f840"/>
<rect x="179.0" y="421.3" width="2.0" height="13.3" fill="#44ff14"/>
<rect x="183.0" y="421.3" width="1.0" height="13.3" fill="#70f840"/>
<rect x="188.0" y="421.3" width="2.0" height="13.3" fill="#44ff14"/>
<rect x="192.0" y="421.3" width="1.0" height="13.3" fill="#70f840"/>
<rect x="195.0" y="421.3" width="1.0" height="13.3" fill="#70f840"/>
<rect x="197.0" y="421.3" width="1.0" height="13.3" fill="#70f840"/>
<rect x="198.0" y="408.0" width="1.0" height="26.7" fill="#b8f070"/>
<rect x="200.0" y="421.3" width="2.0" height="13.3" fill="#44ff14"/>
<rect x="206.0" y="421.3" width="2.0" height="13.3" fill="#44ff14"/>
<rect x="209.0" y="421.3" width="1.0" height="13.3" fill="#70f840"/>
<rect x="212.0" y="421.3" width="1.0" height="13.3" fill="#70f840"/>
<rect x="215.0" y="421.3" width="1.0" height="13.3" fill="#70f840"/>
<rect x="218.0" y="421.3" width="2.0" height="13.3" fill="#44ff14"/>
<rect x="222.0" y="408.0" width="1.0" height="26.7" fill="#b8f070"/>
<rect x="224.0" y="421.3" width="5.0" height="13.3" fill="#44ff14"/>
<rect x="227.0" y="408.0" width="1.0" height="26.7" fill="#b8f070"/>
<rect x="231.0" y="421.3" width="1.0" height="13.3" fill="#70f840"/>
<rect x="234.0" y="421.3" width="1.0" height="13.3" fill="#70f840"/>
<rect x="239.0" y="421.3" width="1.0" height="13.3" fill="#70f840"/>
<rect x="242.0" y="421.3" width="1.0" height="13.3" fill="#70f840"/>
<rect x="245.0" y="421.3" width="1.0" height="13.3" fill="#70f840"/>
<rect x="250.0" y="421.3" width="2.0" height="13.3" fill="#44ff14"/>
<rect x="254.0" y="421.3" width="1.0" height="13.3" fill="#70f840"/>
<rect x="257.0" y="421.3" width="1.0" height="13.3" fill="#70f840"/>
<rect x="260.0" y="421.3" width="1.0" height="13.3" fill="#70f840"/>
<rect x="264.0" y="421.3" width="1.0" height="13.3" fill="#70f840"/>
<rect x="266.0" y="421.3" width="1.0" height="13.3" fill="#70f840"/>
<rect x="269.0" y="421.3" width="1.0" height="13.3" fill="#70f840"/>
<rect x="271.0" y="408.0" width="1.0" height="26.7" fill="#b8f070"/>
<rect x="275.0" y="421.3" width="1.0" height="13.3" fill="#70f840"/>
<rect x="279.0" y="408.0" width="1.0" height="26.7" fill="#b8f070"/>
<rect x="282.0" y="421.3" width="1.0" height="13.3" fill="#70f840"/>
<rect x="287.0" y="421.3" width="1.0" height="13.3" fill="#70f840"/>
<rect x="290.0" y="421.3" width="1.0" height="13.3" fill="#70f840"/>
<rect x="292.0" y="421.3" width="2.0" height="13.3" fill="#44ff14"/>
<rect x="297.0" y="421.3" width="3.0" height="13.3" fill="#44ff14"/>
<rect x="298.0" y="408.0" width="1.0" height="26.7" fill="#b8f070"/>
<rect x="305.0" y="421.3" width="4.0" height="13.3" fill="#44ff14"/>
<rect x="310.0" y="421.3" width="2.0" height="13.3" fill="#44ff14"/>
<rect x="313.0" y="421.3" width="1.0" height="13.3" fill="#70f840"/>
<rect x="316.0" y="421.3" width="2.0" height="13.3" fill="#44ff14"/>
<rect x="325.0" y="421.3" width="1.0" height="13.3" fill="#70f840"/>
<rect x="328.0" y="421.3" width="1.0" height="13.3" fill="#70f840"/>
<rect x="331.0" y="421.3" width="1.0" height="13.3" fill="#70f840"/>
<rect x="333.0" y="421.3" width="3.0" height="13.3" fill="#44ff14"/>
<rect x="337.0" y="421.3" width="1.0" height="13.3" fill="#70f840"/>
<rect x="339.0" y="421.3" width="1.0" height="13.3" fill="#70f840"/>
<rect x="341.0" y="421.3" width="2.0" height="13.3" fill="#44ff14"/>
<rect x="345.0" y="421.3" width="2.0" height="13.3" fill="#44ff14"/>
<rect x="348.0" y="421.3" width="2.0" height="13.3" fill="#44ff14"/>
<rect x="349.0" y="408.0" width="1.0" height="26.7" fill="#b8f070"/>
<rect x="352.0" y="421.3" width="2.0" height="13.3" fill="#44ff14"/>
<rect x="356.0" y="408.0" width="1.0" height="26.7" fill="#b8f070"/>
<rect x="358.0" y="421.3" width="2.0" height="13.3" fill="#44ff14"/>
<rect x="364.0" y="421.3" width="2.0" height="13.3" fill="#44ff14"/>
<rect x="367.0" y="408.0" width="1.0" height="26.7" fill="#b8f070"/>
<rect x="369.0" y="421.3" width="1.0" height="13.3" fill="#70f840"/>
<rect x="372.0" y="408.0" width="3.0" height="26.7" fill="#44ff14"/>
<rect x="373.0" y="394.6" width="1.0" height="40.0" fill="#b8f070"/>
<rect x="377.0" y="421.3" width="3.0" height="13.3" fill="#44ff14"/>
<rect x="382.0" y="408.0" width="1.0" height="26.7" fill="#b8f070"/>
<rect x="384.0" y="421.3" width="3.0" height="13.3" fill="#44ff14"/>
<rect x="386.0" y="408.0" width="1.0" height="26.7" fill="#b8f070"/>
<rect x="388.0" y="421.3" width="2.0" height="13.3" fill="#44ff14"/>
<rect x="391.0" y="421.3" width="6.0" height="13.3" fill="#44ff14"/>
<rect x="394.0" y="408.0" width="1.0" height="26.7" fill="#b8f070"/>
<rect x="400.0" y="408.0" width="3.0" height="26.7" fill="#44ff14"/>
<rect x="406.0" y="408.0" width="1.0" height="26.7" fill="#b8f070"/>
<rect x="409.0" y="421.3" width="8.0" height="13.3" fill="#44ff14"/>
<rect x="413.0" y="408.0" width="3.0" height="26.7" fill="#44ff14"/>
<rect x="418.0" y="421.3" width="2.0" height="13.3" fill="#44ff14"/>
<rect x="422.0" y="421.3" width="2.0" height="13.3" fill="#44ff14"/>
<rect x="428.0" y="421.3" width="1.0" height="13.3" fill="#70f840"/>
<rect x="434.0" y="421.3" width="1.0" height="13.3" fill="#70f840"/>
<rect x="437.0" y="421.3" width="5.0" height="13.3" fill="#44ff14"/>
<rect x="439.0" y="408.0" width="1.0" height="26.7" fill="#b8f070"/>
<rect x="444.0" y="421.3" width="2.0" height="13.3" fill="#44ff14"/>
<rect x="448.0" y="421.3" width="1.0" height="13.3" fill="#70f840"/>
<rect x="449" y="300.5" width="1.2" height="134" fill="#e8e8e8"/>
<rect x="40" y="299" width="422" height="1.2" fill="#000030"/>
<rect x="40" y="299" width="1.6" height="136" fill="#000"/>
<rect x="460.4" y="299" width="1.6" height="136" fill="#000"/>
<rect x="40" y="434.2" width="422" height="1.4" fill="#000028"/>
<rect x="39" y="300.60" width="2" height="1.3" fill="#1c1cc8"/>
<rect x="461" y="300.60" width="3" height="1.3" fill="#1c1cc8"/>
<rect x="39" y="327.30" width="2" height="1.3" fill="#1c1cc8"/>
<rect x="461" y="327.30" width="3" height="1.3" fill="#1c1cc8"/>
<rect x="39" y="354.00" width="2" height="1.3" fill="#1c1cc8"/>
<rect x="461" y="354.00" width="3" height="1.3" fill="#1c1cc8"/>
<rect x="39" y="380.70" width="2" height="1.3" fill="#1c1cc8"/>
<rect x="461" y="380.70" width="3" height="1.3" fill="#1c1cc8"/>
<rect x="39" y="407.40" width="2" height="1.3" fill="#1c1cc8"/>
<rect x="461" y="407.40" width="3" height="1.3" fill="#1c1cc8"/>
<rect x="39" y="434.10" width="2" height="1.3" fill="#1c1cc8"/>
<rect x="461" y="434.10" width="3" height="1.3" fill="#1c1cc8"/>
<text transform="translate(35.40 142.50) scale(0.86 1)" text-anchor="end" font-family="Liberation Sans" font-size="12.8" fill="#000">100</text>
<text transform="translate(35.40 169.24) scale(0.86 1)" text-anchor="end" font-family="Liberation Sans" font-size="12.8" fill="#000">80</text>
<text transform="translate(35.40 195.98) scale(0.86 1)" text-anchor="end" font-family="Liberation Sans" font-size="12.8" fill="#000">60</text>
<text transform="translate(35.40 222.72) scale(0.86 1)" text-anchor="end" font-family="Liberation Sans" font-size="12.8" fill="#000">40</text>
<text transform="translate(35.40 249.46) scale(0.86 1)" text-anchor="end" font-family="Liberation Sans" font-size="12.8" fill="#000">20</text>
<text transform="translate(463.80 142.50) scale(0.86 1)" text-anchor="start" font-family="Liberation Sans" font-size="12.8" fill="#000">16</text>
<text transform="translate(463.80 159.21) scale(0.86 1)" text-anchor="start" font-family="Liberation Sans" font-size="12.8" fill="#000">14</text>
<text transform="translate(463.80 175.93) scale(0.86 1)" text-anchor="start" font-family="Liberation Sans" font-size="12.8" fill="#000">12</text>
<text transform="translate(463.80 192.64) scale(0.86 1)" text-anchor="start" font-family="Liberation Sans" font-size="12.8" fill="#000">10</text>
<text transform="translate(463.80 209.35) scale(0.86 1)" text-anchor="start" font-family="Liberation Sans" font-size="12.8" fill="#000">8</text>
<text transform="translate(463.80 226.06) scale(0.86 1)" text-anchor="start" font-family="Liberation Sans" font-size="12.8" fill="#000">6</text>
<text transform="translate(463.80 242.77) scale(0.86 1)" text-anchor="start" font-family="Liberation Sans" font-size="12.8" fill="#000">4</text>
<text transform="translate(463.80 259.49) scale(0.86 1)" text-anchor="start" font-family="Liberation Sans" font-size="12.8" fill="#000">2</text>
<text transform="translate(43.50 285.90) scale(0.86 1)" text-anchor="middle" font-family="Liberation Sans" font-size="12.8" fill="#000">0.0</text>
<text transform="translate(89.94 285.90) scale(0.86 1)" text-anchor="middle" font-family="Liberation Sans" font-size="12.8" fill="#000">0.5</text>
<text transform="translate(136.38 285.90) scale(0.86 1)" text-anchor="middle" font-family="Liberation Sans" font-size="12.8" fill="#000">1.0</text>
<text transform="translate(182.82 285.90) scale(0.86 1)" text-anchor="middle" font-family="Liberation Sans" font-size="12.8" fill="#000">1.5</text>
<text transform="translate(229.26 285.90) scale(0.86 1)" text-anchor="middle" font-family="Liberation Sans" font-size="12.8" fill="#000">2.0</text>
<text transform="translate(275.70 285.90) scale(0.86 1)" text-anchor="middle" font-family="Liberation Sans" font-size="12.8" fill="#000">2.5</text>
<text transform="translate(322.14 285.90) scale(0.86 1)" text-anchor="middle" font-family="Liberation Sans" font-size="12.8" fill="#000">3.0</text>
<text transform="translate(368.58 285.90) scale(0.86 1)" text-anchor="middle" font-family="Liberation Sans" font-size="12.8" fill="#000">3.5</text>
<text transform="translate(415.02 285.90) scale(0.86 1)" text-anchor="middle" font-family="Liberation Sans" font-size="12.8" fill="#000">4.0</text>
<text transform="translate(461.46 285.90) scale(0.86 1)" text-anchor="middle" font-family="Liberation Sans" font-size="12.8" fill="#000">4.5</text>
<text transform="translate(35.40 304.50) scale(0.86 1)" text-anchor="end" font-family="Liberation Sans" font-size="12.8" fill="#000">10</text>
<text transform="translate(463.80 304.50) scale(0.86 1)" text-anchor="start" font-family="Liberation Sans" font-size="12.8" fill="#000">10</text>
<text transform="translate(35.40 331.20) scale(0.86 1)" text-anchor="end" font-family="Liberation Sans" font-size="12.8" fill="#000">8</text>
<text transform="translate(463.80 331.20) scale(0.86 1)" text-anchor="start" font-family="Liberation Sans" font-size="12.8" fill="#000">8</text>
<text transform="translate(35.40 357.90) scale(0.86 1)" text-anchor="end" font-family="Liberation Sans" font-size="12.8" fill="#000">6</text>
<text transform="translate(463.80 357.90) scale(0.86 1)" text-anchor="start" font-family="Liberation Sans" font-size="12.8" fill="#000">6</text>
<text transform="translate(35.40 384.60) scale(0.86 1)" text-anchor="end" font-family="Liberation Sans" font-size="12.8" fill="#000">4</text>
<text transform="translate(463.80 384.60) scale(0.86 1)" text-anchor="start" font-family="Liberation Sans" font-size="12.8" fill="#000">4</text>
<text transform="translate(35.40 411.30) scale(0.86 1)" text-anchor="end" font-family="Liberation Sans" font-size="12.8" fill="#000">2</text>
<text transform="translate(463.80 411.30) scale(0.86 1)" text-anchor="start" font-family="Liberation Sans" font-size="12.8" fill="#000">2</text>
<text transform="translate(43.50 447.70) scale(0.86 1)" text-anchor="middle" font-family="Liberation Sans" font-size="12.8" fill="#000">0.0</text>
<text transform="translate(89.94 447.70) scale(0.86 1)" text-anchor="middle" font-family="Liberation Sans" font-size="12.8" fill="#000">0.5</text>
<text transform="translate(136.38 447.70) scale(0.86 1)" text-anchor="middle" font-family="Liberation Sans" font-size="12.8" fill="#000">1.0</text>
<text transform="translate(182.82 447.70) scale(0.86 1)" text-anchor="middle" font-family="Liberation Sans" font-size="12.8" fill="#000">1.5</text>
<text transform="translate(229.26 447.70) scale(0.86 1)" text-anchor="middle" font-family="Liberation Sans" font-size="12.8" fill="#000">2.0</text>
<text transform="translate(275.70 447.70) scale(0.86 1)" text-anchor="middle" font-family="Liberation Sans" font-size="12.8" fill="#000">2.5</text>
<text transform="translate(322.14 447.70) scale(0.86 1)" text-anchor="middle" font-family="Liberation Sans" font-size="12.8" fill="#000">3.0</text>
<text transform="translate(368.58 447.70) scale(0.86 1)" text-anchor="middle" font-family="Liberation Sans" font-size="12.8" fill="#000">3.5</text>
<text transform="translate(415.02 447.70) scale(0.86 1)" text-anchor="middle" font-family="Liberation Sans" font-size="12.8" fill="#000">4.0</text>
<text transform="translate(461.46 447.70) scale(0.86 1)" text-anchor="middle" font-family="Liberation Sans" font-size="12.8" fill="#000">4.5</text>
</svg>
<div class="t" style="left:27.32px;top:7.87px;font-size:13.5px;color:#8a8a8a;transform:scaleX(0.7762);letter-spacing:0.5px;font-weight:normal">Nero CD-DVD Speed 4.7.7.16</div>
<div class="t" style="left:5.70px;top:33.64px;font-size:12px;color:#5c5c5c;transform:scaleX(0.8940);letter-spacing:0.35px;font-weight:normal">Datei</div>
<div class="t" style="left:46.70px;top:33.64px;font-size:12px;color:#5c5c5c;transform:scaleX(0.9312);letter-spacing:0.35px;font-weight:normal">Test durchführen</div>
<div class="t" style="left:149.70px;top:33.64px;font-size:12px;color:#5c5c5c;transform:scaleX(0.8341);letter-spacing:0.35px;font-weight:normal">Extra</div>
<div class="t" style="left:189.90px;top:33.64px;font-size:12px;color:#5c5c5c;transform:scaleX(0.9288);letter-spacing:0.35px;font-weight:normal">Hilfe</div>
<div class="t" style="left:167.60px;top:66.14px;font-size:12px;color:#000;transform:scaleX(0.8847);letter-spacing:0.35px;font-weight:normal">[0:0]</div>
<div class="t" style="left:199.50px;top:66.14px;font-size:12px;color:#000;transform:scaleX(0.7974);letter-spacing:0.35px;font-weight:normal">LITE-ON DVDRW LH-20A1P KL0N</div>
<div class="t" style="left:499.70px;top:65.84px;font-size:12px;color:#000;transform:scaleX(0.8793);letter-spacing:0.35px;font-weight:normal">Start</div>
<div class="t" style="left:567.60px;top:65.84px;font-size:12px;color:#000;transform:scaleX(0.8368);letter-spacing:0.35px;font-weight:normal">Beenden</div>
<div class="t" style="left:12.60px;top:105.04px;font-size:12px;color:#000;transform:scaleX(0.8079);letter-spacing:0.35px;font-weight:normal">Benchmark</div>
<div class="t" style="left:78.80px;top:105.04px;font-size:12px;color:#000;transform:scaleX(0.8063);letter-spacing:0.35px;font-weight:normal">Disk erstellen</div>
<div class="t" style="left:153.50px;top:105.04px;font-size:12px;color:#000;transform:scaleX(0.7826);letter-spacing:0.35px;font-weight:normal">Disk-Info</div>
<div class="t" style="left:208.00px;top:103.34px;font-size:12px;color:#101030;transform:scaleX(0.8055);letter-spacing:0.35px;font-weight:normal">Diskqualität</div>
<div class="t" style="left:275.00px;top:105.04px;font-size:12px;color:#000;transform:scaleX(0.8187);letter-spacing:0.35px;font-weight:normal">Disc prüfen</div>
<div class="t" style="left:340.00px;top:105.04px;font-size:12px;color:#000;transform:scaleX(0.8191);letter-spacing:0.35px;font-weight:normal">TA-Jitter</div>
<div class="t" style="left:211.20px;top:123.74px;font-size:12px;color:#000;transform:scaleX(0.8040);letter-spacing:0.35px;font-weight:normal">aufgenommen mit</div>
<div class="t" style="left:297.60px;top:123.74px;font-size:12px;color:#000;transform:scaleX(0.8256);letter-spacing:0.35px;font-weight:normal">PIONEER</div>
<div class="t" style="left:351.90px;top:123.74px;font-size:12px;color:#000;transform:scaleX(0.8256);letter-spacing:0.35px;font-weight:normal">BD-RW</div>
<div class="t" style="left:397.40px;top:123.74px;font-size:12px;color:#000;transform:scaleX(0.8444);letter-spacing:0.35px;font-weight:normal">BDR-212V</div>
<div class="t" style="left:494.40px;top:126.64px;font-size:12px;color:#000;transform:scaleX(0.8064);letter-spacing:0.35px;font-weight:normal">Disk-Info</div>
<div class="t" style="left:493.80px;top:141.94px;font-size:12px;color:#000;transform:scaleX(0.8422);letter-spacing:0.35px;font-weight:normal">Typ:</div>
<div class="t" style="left:492.98px;top:159.14px;font-size:12px;color:#000;transform:scaleX(0.8163);letter-spacing:0.35px;font-weight:normal">ID:</div>
<div class="t" style="left:493.80px;top:176.84px;font-size:12px;color:#000;transform:scaleX(0.8156);letter-spacing:0.35px;font-weight:normal">Datum:</div>
<div class="t" style="left:493.80px;top:194.04px;font-size:12px;color:#000;transform:scaleX(0.8003);letter-spacing:0.35px;font-weight:normal">Label:</div>
<div class="t" style="left:539.20px;top:141.94px;font-size:12px;color:#24246e;transform:scaleX(0.8356);letter-spacing:0.35px;font-weight:normal">DVD-R</div>
<div class="t" style="left:539.20px;top:159.14px;font-size:12px;color:#24246e;transform:scaleX(0.8505);letter-spacing:0.35px;font-weight:normal">TYG03</div>
<div class="t" style="left:539.20px;top:176.84px;font-size:12px;color:#24246e;transform:scaleX(0.8468);letter-spacing:0.35px;font-weight:normal">20 Oct 2020</div>
<div class="t" style="left:539.20px;top:194.04px;font-size:12px;color:#24246e;transform:scaleX(0.8337);letter-spacing:0.35px;font-weight:normal">ODC__DVD</div>
<div class="t" style="left:494.80px;top:218.34px;font-size:12px;color:#000;transform:scaleX(0.8084);letter-spacing:0.35px;font-weight:normal">Einstellungen</div>
<div class="t" style="left:498.50px;top:238.44px;font-size:12px;color:#000;transform:scaleX(0.8178);letter-spacing:0.35px;font-weight:normal">8 X</div>
<div class="t" style="left:496.00px;top:264.44px;font-size:12px;color:#000;transform:scaleX(0.7776);letter-spacing:0.35px;font-weight:normal">Start:</div>
<div class="t" style="left:496.00px;top:287.34px;font-size:12px;color:#000;transform:scaleX(0.8358);letter-spacing:0.35px;font-weight:normal">Ende:</div>
<div class="t" style="left:551.50px;top:263.34px;font-size:12px;color:#000;transform:scaleX(0.8359);letter-spacing:0.35px;font-weight:normal">0000 MB</div>
<div class="t" style="left:551.50px;top:286.34px;font-size:12px;color:#000;transform:scaleX(0.8359);letter-spacing:0.35px;font-weight:normal">4489 MB</div>
<div class="t" style="left:512.00px;top:304.64px;font-size:12px;color:#000;transform:scaleX(0.8406);letter-spacing:0.35px;font-weight:normal">Schnelles Scannen</div>
<div class="t" style="left:512.00px;top:322.34px;font-size:12px;color:#000;transform:scaleX(0.8506);letter-spacing:0.35px;font-weight:normal">C1/PIE anzeigen</div>
<div class="t" style="left:512.00px;top:337.84px;font-size:12px;color:#000;transform:scaleX(0.8493);letter-spacing:0.35px;font-weight:normal">C2/PIF anzeigen</div>
<div class="t" style="left:512.00px;top:353.44px;font-size:12px;color:#000;transform:scaleX(0.8144);letter-spacing:0.35px;font-weight:normal">Jitter anzeigen</div>
<div class="t" style="left:512.00px;top:369.24px;font-size:12px;color:#000;transform:scaleX(0.8445);letter-spacing:0.35px;font-weight:normal">Zeige Lesegeschw.</div>
<div class="t" style="left:512.00px;top:384.74px;font-size:12px;color:#9a9a9a;transform:scaleX(0.8471);letter-spacing:0.35px;font-weight:normal">Zeige Schreibgeschw.</div>
<div class="t" style="left:549.20px;top:406.54px;font-size:12px;color:#000;transform:scaleX(0.7813);letter-spacing:0.35px;font-weight:normal">Erweitert</div>
<div class="t" style="left:495.80px;top:441.14px;font-size:12px;color:#000;transform:scaleX(0.8125);letter-spacing:0.35px;font-weight:normal">Qualitätsindex:</div>
<div class="t" style="left:602.10px;top:441.14px;font-size:12px;color:#24246e;transform:scaleX(0.8200);letter-spacing:0.35px;font-weight:normal">90</div>
<div class="t" style="left:496.00px;top:474.54px;font-size:12px;color:#000;transform:scaleX(0.8041);letter-spacing:0.35px;font-weight:normal">Fortschritt:</div>
<div class="t" style="left:586.40px;top:474.54px;font-size:12px;color:#24246e;transform:scaleX(0.7831);letter-spacing:0.35px;font-weight:normal">100 %</div>
<div class="t" style="left:496.00px;top:491.04px;font-size:12px;color:#000;transform:scaleX(0.7981);letter-spacing:0.35px;font-weight:normal">Position:</div>
<div class="t" style="left:572.10px;top:490.54px;font-size:12px;color:#24246e;transform:scaleX(0.8439);letter-spacing:0.35px;font-weight:normal">4488 MB</div>
<div class="t" style="left:496.00px;top:505.84px;font-size:12px;color:#000;transform:scaleX(0.8387);letter-spacing:0.35px;font-weight:normal">Geschwindigkeit:</div>
<div class="t" style="left:584.30px;top:505.84px;font-size:12px;color:#24246e;transform:scaleX(0.8260);letter-spacing:0.35px;font-weight:normal">8.33 X</div>
<div class="t" style="left:28.90px;top:459.64px;font-size:12px;color:#000;transform:scaleX(0.7759);letter-spacing:0.35px;font-weight:normal">PI Errors</div>
<div class="t" style="left:16.30px;top:475.64px;font-size:12px;color:#000;transform:scaleX(0.8229);letter-spacing:0.35px;font-weight:normal">Durchschnitt</div>
<div class="t" style="left:16.30px;top:490.74px;font-size:12px;color:#000;transform:scaleX(0.7885);letter-spacing:0.35px;font-weight:normal">Maximum:</div>
<div class="t" style="left:16.30px;top:505.24px;font-size:12px;color:#000;transform:scaleX(0.8002);letter-spacing:0.35px;font-weight:normal">Gesamt:</div>
<div class="t" style="left:117.60px;top:475.64px;font-size:12px;color:#24246e;transform:scaleX(0.8314);letter-spacing:0.35px;font-weight:normal">12.64</div>
<div class="t" style="left:132.70px;top:490.74px;font-size:12px;color:#24246e;transform:scaleX(0.8058);letter-spacing:0.35px;font-weight:normal">78</div>
<div class="t" style="left:108.00px;top:505.24px;font-size:12px;color:#24246e;transform:scaleX(0.8547);letter-spacing:0.35px;font-weight:normal">226865</div>
<div class="t" style="left:187.00px;top:459.64px;font-size:12px;color:#000;transform:scaleX(0.7888);letter-spacing:0.35px;font-weight:normal">PI Failures</div>
<div class="t" style="left:175.00px;top:475.64px;font-size:12px;color:#000;transform:scaleX(0.8244);letter-spacing:0.35px;font-weight:normal">Durchschnitt</div>
<div class="t" style="left:175.00px;top:490.74px;font-size:12px;color:#000;transform:scaleX(0.7902);letter-spacing:0.35px;font-weight:normal">Maximum:</div>
<div class="t" style="left:175.00px;top:505.24px;font-size:12px;color:#000;transform:scaleX(0.7939);letter-spacing:0.35px;font-weight:normal">Gesamt:</div>
<div class="t" style="left:281.80px;top:475.64px;font-size:12px;color:#24246e;transform:scaleX(0.8289);letter-spacing:0.35px;font-weight:normal">0.01</div>
<div class="t" style="left:296.40px;top:490.74px;font-size:12px;color:#24246e;transform:scaleX(0.8429);letter-spacing:0.35px;font-weight:normal">4</div>
<div class="t" style="left:280.40px;top:505.24px;font-size:12px;color:#24246e;transform:scaleX(0.7802);letter-spacing:0.35px;font-weight:normal">1588</div>
<div class="t" style="left:344.40px;top:459.84px;font-size:12px;color:#000;transform:scaleX(0.8142);letter-spacing:0.35px;font-weight:normal">Jitter</div>
<div class="t" style="left:334.20px;top:476.34px;font-size:12px;color:#000;transform:scaleX(0.8244);letter-spacing:0.35px;font-weight:normal">Durchschnitt</div>
<div class="t" style="left:334.20px;top:491.04px;font-size:12px;color:#000;transform:scaleX(0.8042);letter-spacing:0.35px;font-weight:normal">Maximum:</div>
<div class="t" style="left:334.20px;top:508.34px;font-size:12px;color:#000;transform:scaleX(0.8090);letter-spacing:0.35px;font-weight:normal">PO Ausfälle:</div>
<div class="t" style="left:460.50px;top:475.84px;font-size:12px;color:#000;transform:scaleX(1.0000);letter-spacing:0px;font-weight:normal">-</div>
<div class="t" style="left:460.50px;top:490.54px;font-size:12px;color:#000;transform:scaleX(1.0000);letter-spacing:0px;font-weight:normal">-</div>
<div class="t" style="left:460.50px;top:507.84px;font-size:12px;color:#000;transform:scaleX(1.0000);letter-spacing:0px;font-weight:normal">-</div>
</body></html>
